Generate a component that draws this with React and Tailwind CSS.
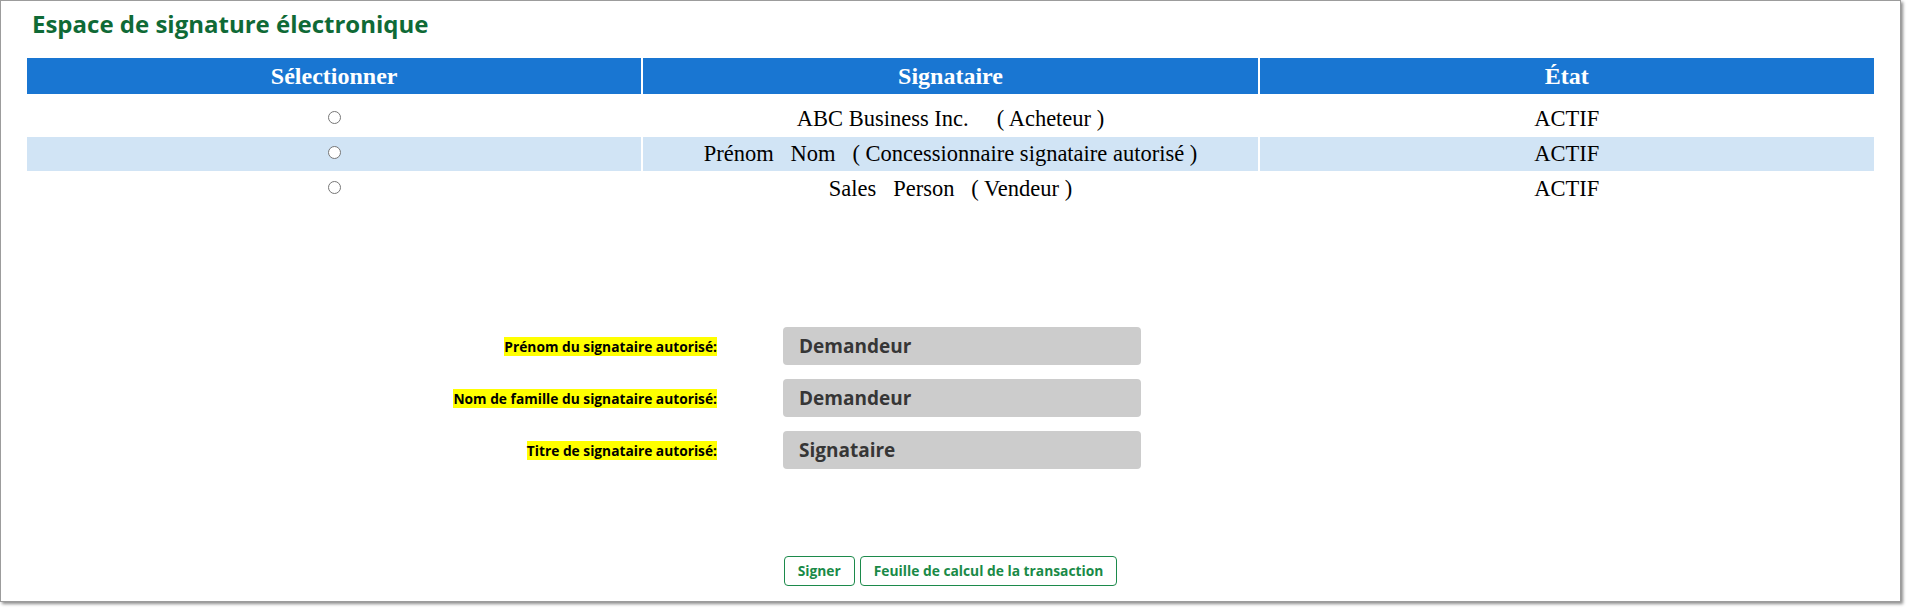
import React from "react";

const signers = [
  { id: 1, name: "ABC Business Inc.\u00a0\u00a0\u00a0\u00a0\u00a0( Acheteur )", status: "ACTIF" },
  { id: 2, name: "Prénom\u00a0\u00a0\u00a0Nom\u00a0\u00a0\u00a0( Concessionnaire signataire autorisé )", status: "ACTIF" },
  { id: 3, name: "Sales\u00a0\u00a0\u00a0Person\u00a0\u00a0\u00a0( Vendeur )", status: "ACTIF" },
];

const fields = [
  { label: "Prénom du signataire autorisé:", value: "Demandeur" },
  { label: "Nom de famille du signataire autorisé:", value: "Demandeur" },
  { label: "Titre de signataire autorisé:", value: "Signataire" },
];

const serif = "font-['Liberation_Serif','Times_New_Roman',serif]";
const sans = "font-['Open_Sans','Noto_Sans',sans-serif]";

const Radio = () => (
  <span className="mb-[4px] inline-block h-[13px] w-[13px] rounded-full border border-[#767676] bg-white" />
);

export default function App() {
  return (
    <div className="min-h-screen bg-white">
      <div className="flex h-[602px] w-[1901px] flex-col border border-[#9c9c9c] bg-white shadow-[2px_2px_3px_rgba(0,0,0,0.45)]">
        {/* Title */}
        <h1 className={`${sans} pl-[31px] pt-[6px] text-[24px] font-bold leading-[33px] text-[#0f6a36]`}>
          Espace de signature électronique
        </h1>

        {/* Signers table */}
        <div className={`${serif} mx-[26px] mt-[18px]`}>
          <div className="grid h-[36px] grid-cols-3 gap-x-[2px]">
            {["Sélectionner", "Signataire", "État"].map((h) => (
              <div key={h} className="flex items-center justify-center bg-[#1976d2] text-[24px] font-bold text-white">
                {h}
              </div>
            ))}
          </div>
          <div className="mt-[8px] flex flex-col gap-y-[1px]">
            {signers.map((s, i) => {
              const bg = i % 2 === 1 ? "bg-[#d1e4f5]" : "bg-white";
              return (
                <div key={s.id} className="grid h-[34px] grid-cols-3 gap-x-[2px] text-[22.5px] text-black">
                  <div className={`flex items-center justify-center ${bg}`}>
                    <Radio />
                  </div>
                  <div className={`flex items-center justify-center ${bg}`}>{s.name}</div>
                  <div className={`flex items-center justify-center ${bg}`}>{s.status}</div>
                </div>
              );
            })}
          </div>
        </div>

        {/* Authorized signer fields */}
        <div className={`${sans} mt-[121px] flex flex-col gap-y-[14px]`}>
          {fields.map((f) => (
            <div key={f.label} className="flex items-center">
              <div className="flex w-[716px] justify-end">
                <span className="bg-[#ffff00] text-[13.75px] font-bold leading-[19px] text-black">{f.label}</span>
              </div>
              <div className="ml-[66px] flex h-[38px] w-[358px] items-center rounded-[4px] bg-[#cccccc] pl-[16px] text-[19px] font-bold text-[#363636]">
                {f.value}
              </div>
            </div>
          ))}
        </div>

        {/* Actions */}
        <div className={`${sans} mt-[87px] flex justify-center gap-x-[5px]`}>
          <button className="h-[30px] rounded-[4px] border border-[#1c8a4b] bg-white px-[13px] text-[13.8px] font-bold text-[#198a47]">
            Signer
          </button>
          <button className="h-[30px] rounded-[4px] border border-[#1c8a4b] bg-white px-[13px] text-[13.8px] font-bold text-[#198a47]">
            Feuille de calcul de la transaction
          </button>
        </div>
      </div>
    </div>
  );
}
